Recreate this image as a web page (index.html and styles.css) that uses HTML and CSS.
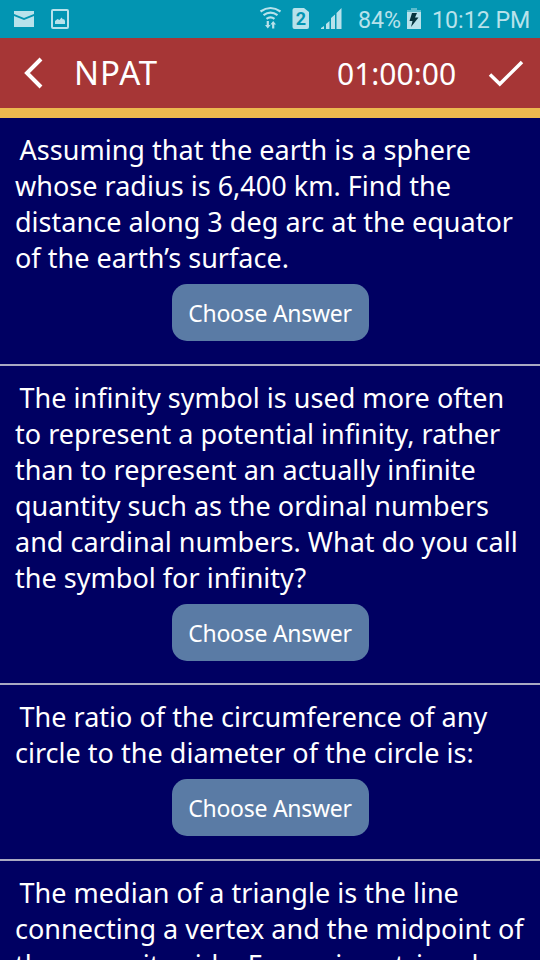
FILE: index.html
```
<!DOCTYPE html>
<html lang="en">
<head>
<meta charset="utf-8">
<title>NPAT</title>
<link rel="stylesheet" href="styles.css">
</head>
<body>
<div class="screen">
  <div class="status">
    <svg class="status-left" width="80" height="38" viewBox="0 0 80 38">
      <path d="M14 11h20v3l-10 4-10-4zM14 16l10 4 10-4v11H14z" fill="#b8e2eb"/>
      <rect x="52" y="10" width="16" height="18" rx="1" fill="none" stroke="#b8e2eb" stroke-width="2"/>
      <path d="M55 24v-3l2.500-2 2 1 2-2.500 1.500 2 1-.5 1 2v3z" fill="#b8e2eb"/>
    </svg>
    <svg class="status-signal" width="90" height="38" viewBox="0 0 90 38">
      <g fill="none" stroke="#b8e2eb" stroke-width="2.200">
        <path d="M9.500 11.500q10-7 20 0M12.500 15.200q7-5 14 0M15.500 18.800q4-3 8 0"/>
        <path d="M16.800 21v5M22.200 28.500v-5"/>
      </g>
      <path d="M14 25h5.600l-2.800 3.500zM19.400 24.500h5.600l-2.800-3.500z" fill="#b8e2eb"/>
      <path d="M43.500 8h9.500l5 4v15q0 2-2 2H43.500q-2 0-2-2V10q0-2 2-2z" fill="#b8e2eb"/>
      <text class="sim" x="49.800" y="25" text-anchor="middle">2</text>
      <path d="M70 29v-1l3-2v3zM75 29v-5l3.500-3v8zM80 29V18l4-3.500V29zM85.500 29V13l5-5v21z" fill="#b8e2eb"/>
    </svg>
    <span class="percent">84%</span>
    <svg class="battery" width="14" height="22" viewBox="0 0 14 22">
      <path d="M0 5V2h4V0h6v2h4v3z" fill="#5dbccd"/>
      <path d="M0 4h14v17H0z" fill="#b8e2eb"/>
      <path d="M5 5h5L8 9.500h3.500L4 19l1.500-6H2.500z" fill="#06343d"/>
    </svg>
    <span class="clock">10:12 PM</span>
  </div>
  <header class="bar">
    <svg class="back" width="20" height="32" viewBox="0 0 20 32"><path d="M19 2 5 16l14 14" fill="none" stroke="#fff" stroke-width="4"/></svg>
    <h1 class="title">NPAT</h1>
    <span class="timer">01:00:00</span>
    <svg class="check" width="36" height="28" viewBox="0 0 36 28"><path d="M2 14.500 11.800 24 34 2" fill="none" stroke="#fff" stroke-width="3.500"/></svg>
  </header>
  <main class="list">
    <section class="item first">
      <p class="question">Assuming that the earth is a sphere<br>whose radius is 6,400 km. Find the<br>distance along 3 deg arc at the equator<br>of the earth’s surface.</p>
      <button class="choose">Choose Answer</button>
    </section>
    <section class="item">
      <p class="question">The infinity symbol is used more often<br>to represent a potential infinity, rather<br>than to represent an actually infinite<br>quantity such as the ordinal numbers<br>and cardinal numbers. What do you call<br>the symbol for infinity?</p>
      <button class="choose">Choose Answer</button>
    </section>
    <section class="item">
      <p class="question">The ratio of the circumference of any<br>circle to the diameter of the circle is:</p>
      <button class="choose">Choose Answer</button>
    </section>
    <section class="item">
      <p class="question">The median of a triangle is the line<br>connecting a vertex and the midpoint of<br>the opposite side. For a given triangle,</p>
    </section>
  </main>
</div>
</body>
</html>
```
FILE: styles.css
```
* { box-sizing: border-box; }
body { margin: 0; background: #000062; font-family: "Noto Sans", sans-serif; color: #fff; }
.screen { width: 540px; height: 960px; overflow: hidden; display: flex; flex-direction: column; }
svg { display: block; flex: none; overflow: visible; }
.status { height: 38px; flex: none; display: flex; background: #0295b2; color: #b8e2eb; font: 23.200px/38px Roboto, sans-serif; white-space: nowrap; }
.status-left { margin-right: 170px; }
.status-signal { width: 92px; margin-right: 16px; }
.sim { font: bold 18px Roboto, sans-serif; fill: #0295b2; }
.percent { width: 49px; padding-top: 1px; }
.battery { margin-top: 8px; }
.clock { margin-left: 11px; padding-top: 1px; }
.bar { height: 80px; flex: none; display: flex; align-items: center; background: #a63636; border-bottom: 10px solid #edb94f; }
.back { margin: 0 0 1px 22px; }
.title { width: 263px; margin: 0 0 0 32px; font-size: 33px; line-height: 44px; font-weight: 400; letter-spacing: 0.900px; }
.timer { font-size: 30px; line-height: 40px; width: 151px; padding-top: 2px; }
.check { margin-top: 1px; }
.list { flex: none; }
.item { padding: 14px 0 22.300px 15px; border-top: 2px solid #a9a9c2; }
.first { border-top: 0; padding-bottom: 23px; }
.question { margin: 0 0 8px; font-size: 27px; line-height: 36px; text-indent: 4.500px; letter-spacing: 0.020px; white-space: nowrap; }
.choose { display: block; width: 197px; height: 57px; margin-left: 157px; padding: 1px 1px 0 0; border: 0; border-radius: 15px; background: #5a7ba5; color: #fff; font: 23px/57px "Noto Sans", sans-serif; letter-spacing: -0.280px; }
```
